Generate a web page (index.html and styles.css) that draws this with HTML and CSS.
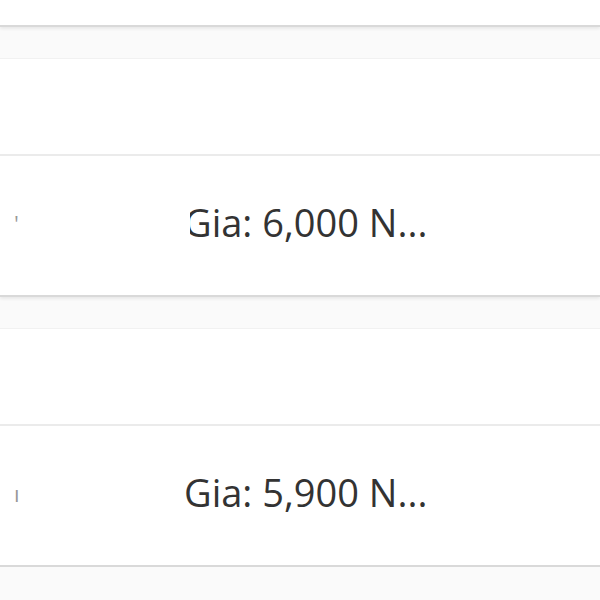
FILE: index.html
```html
<!DOCTYPE html>
<html lang="vi">
<head>
  <meta charset="UTF-8">
  <title>Danh sách sản phẩm</title>
  <link rel="stylesheet" href="styles.css">
</head>
<body>

  <div class="product-list">
    <div class="card">
      <div class="card-media"></div>
      <div class="card-body"></div>
    </div>

    <div class="card">
      <div class="card-media"></div>
      <div class="card-body">
        <span class="side-note">'</span>
        <span class="price clipped">Gia: 6,000 N...</span>
      </div>
    </div>

    <div class="card">
      <div class="card-media"></div>
      <div class="card-body">
        <span class="side-note">ı</span>
        <span class="price">Gia: 5,900 N...</span>
      </div>
    </div>
  </div>

</body>
</html>
```

FILE: styles.css
```css
body {
  margin: 0;
  background: #fafafa;
  font-family: "Open Sans", Arial, sans-serif;
  color: #333;
}

.product-list {
  display: flex;
  flex-direction: column;
  gap: 31px;
  margin-top: -212px;
}

.card {
  background: #fff;
  border-top: 1px solid #f1f1f1;
  border-bottom: 2px solid #d9d9d9;
  box-shadow: 0 2px 3px rgba(0,0,0,0.07);
}

.card-media {
  height: 95px;
  background: #fff;
  border-bottom: 2px solid #ebebeb;
}

.card-body {
  position: relative;
  height: 139px;
  display: flex;
  align-items: center;
  padding-left: 184px;
}

.price {
  font-size: 38px;
  line-height: 1;
  padding-bottom: 8px;
  white-space: nowrap;
}

.clipped {
  clip-path: inset(0 0 0 6px);
}

.side-note {
  position: absolute;
  left: 14px;
  top: 50%;
  transform: translateY(-60%);
  font-size: 22px;
  color: #555;
  opacity: 0.6;
}
```
